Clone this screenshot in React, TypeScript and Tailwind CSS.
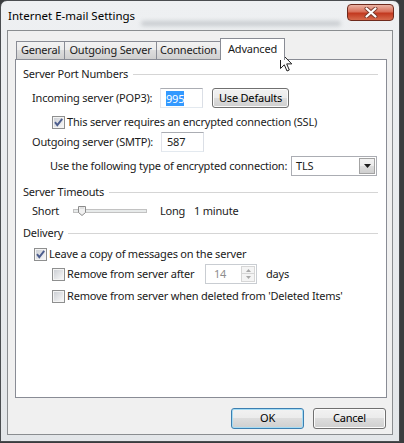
import React from "react";

const btn =
  "flex items-center justify-center rounded-[3px] border bg-[linear-gradient(#f2f2f2_0%,#ebebeb_50%,#dddddd_50%,#cfcfcf_100%)] text-[11px] text-black";

const Checkbox = ({ checked = false }: { checked?: boolean }) => (
  <svg width="13" height="13" viewBox="0 0 13 13" className="shrink-0">
    <defs>
      <linearGradient id="cbfill" x1="0" y1="0" x2="1" y2="1">
        <stop offset="0" stopColor="#cdd0d5" />
        <stop offset="1" stopColor="#f7f7f7" />
      </linearGradient>
    </defs>
    <rect x="0.5" y="0.5" width="12" height="12" fill="#f4f4f4" stroke="#8e8f8f" />
    <rect x="2" y="2" width="9" height="9" fill="url(#cbfill)" />
    {checked && (
      <path d="M3 6.2 L5.3 9.2 L10.2 2.8" fill="none" stroke="#4c5d8d" strokeWidth="1.9" />
    )}
  </svg>
);

const SectionHeader = ({ title, className = "" }: { title: string; className?: string }) => (
  <div className={`flex items-center ${className}`}>
    <span>{title}</span>
    <span className="ml-[5px] h-px flex-1 bg-[#d5d5d5]" />
  </div>
);

const TextBox = ({ value, selected = false, className = "" }: { value: string; selected?: boolean; className?: string }) => (
  <div
    className={`flex h-[20px] items-center border border-[#abadb3] border-b-[#e3e9ef] border-l-[#e2e3ea] border-r-[#dbdfe6] bg-white pl-[5px] ${className}`}
  >
    {selected ? <span className="bg-[#3399ff] leading-[15px] text-white">{value}</span> : <span>{value}</span>}
  </div>
);

const Tab = ({ label, active = false, className = "" }: { label: string; active?: boolean; className?: string }) =>
  active ? (
    <div
      className={`relative z-10 -mb-px flex h-[22px] items-start justify-center border border-b-0 border-[#898c95] bg-white pt-[2px] ${className}`}
    >
      {label}
    </div>
  ) : (
    <div
      className={`flex h-[18px] items-center justify-center border border-b-0 border-[#898c95] bg-[linear-gradient(#f2f2f2_0%,#ebebeb_50%,#dddddd_50%,#cfcfcf_100%)] ${className}`}
    >
      {label}
    </div>
  );

const Slider = () => (
  <svg width="74" height="14" viewBox="0 0 74 14" className="shrink-0">
    <rect x="0.5" y="5.5" width="73" height="3" fill="#e7eaea" stroke="#c2c2c2" />
    <path d="M5.5 2.5 H12.5 V8.5 L9 11.5 L5.5 8.5 Z" fill="#f1f1f1" stroke="#8c8c8c" />
    <path d="M7 4 H11" stroke="#d0d0d0" />
  </svg>
);

export default function App() {
  return (
    <div className="relative h-[443px] w-[404px] overflow-hidden whitespace-nowrap bg-[#3a3c3e] font-['Segoe_UI','Noto_Sans',sans-serif] text-[11px] tracking-[-0.2px] text-[#1b1b1b]">
      <div className="flex h-[442px] w-[400px] flex-col rounded-t-[7px] border border-[#4a4d50] bg-[linear-gradient(#eef0f2,#e3e6e9)]">
        {/* title bar */}
        <div className="flex h-[29px] items-start pl-[7px] pr-[5px]">
          <span className="mt-[6px] text-[11.5px] tracking-normal text-black">Internet E-mail Settings</span>
          <span className="mx-[6px] mt-[20px] h-[5px] flex-1 rounded bg-[#aeb3b8] opacity-60 blur-[2px]" />
          <div className="mt-[3px] flex h-[17px] w-[47px] items-center justify-center rounded-[4px] border border-[#6e2a1d] bg-[linear-gradient(#eab3a4_0%,#d9705a_45%,#c2391f_55%,#d66a4c_100%)]">
            <svg width="14" height="11" viewBox="0 0 14 11">
              <path d="M2.5 1.5 L11.5 9.5 M11.5 1.5 L2.5 9.5" stroke="#7a3a2c" strokeWidth="4" strokeLinecap="round" />
              <path d="M2.5 1.5 L11.5 9.5 M11.5 1.5 L2.5 9.5" stroke="#ffffff" strokeWidth="2.2" strokeLinecap="round" />
            </svg>
          </div>
        </div>

        {/* client area */}
        <div className="mx-[6px] flex h-[405px] flex-col border border-[#8a8d90] bg-[#f0f0f0] pl-[7px] pr-[5px] pt-[7px]">
          <div className="flex h-[21px] items-end pl-[1px]">
            <Tab label="General" className="w-[49px]" />
            <Tab label="Outgoing Server" className="w-[92px] border-l-0" />
            <Tab label="Connection" className="w-[64px] border-l-0" />
            <Tab label="Advanced" active className="-ml-[1px] w-[65px]" />
          </div>

          <div className="flex h-[339px] w-[372px] flex-col border border-[#898c95] bg-white pl-[7px] pr-[8px] pt-[7px]">
            <SectionHeader title="Server Port Numbers" className="h-[15px]" />

            <div className="mt-[6px] flex h-[20px] items-center pl-[9px]">
              <span className="w-[128px]">Incoming server (POP3):</span>
              <TextBox value="995" selected className="w-[43px]" />
              <button className={`${btn} ml-[9px] h-[20px] w-[77px] border-[#707070] shadow-[inset_0_0_0_1px_#fbfbfb]`}>
                Use Defaults
              </button>
            </div>

            <div className="mt-[6px] flex h-[16px] items-center gap-[2px] pl-[29px]">
              <Checkbox checked />
              <span>This server requires an encrypted connection (SSL)</span>
            </div>

            <div className="mt-[2px] flex h-[20px] items-center pl-[9px]">
              <span className="w-[129px]">Outgoing server (SMTP):</span>
              <TextBox value="587" className="w-[43px]" />
            </div>

            <div className="mt-[4px] flex h-[20px] items-center pl-[27px]">
              <span className="w-[241px]">Use the following type of encrypted connection:</span>
              <div className="flex h-[20px] w-[86px] items-center justify-between border border-[#abadb3] bg-white pl-[4px] pr-[1px]">
                <span>TLS</span>
                <div className="flex h-[16px] w-[16px] items-center justify-center border border-[#a3a3a3] bg-[linear-gradient(#f2f2f2_0%,#ebebeb_50%,#dddddd_50%,#cfcfcf_100%)]">
                  <svg width="7" height="4" viewBox="0 0 7 4">
                    <path d="M0 0 H7 L3.5 4 Z" fill="#1b1b1b" />
                  </svg>
                </div>
              </div>
            </div>

            <SectionHeader title="Server Timeouts" className="mt-[8px] h-[16px]" />

            <div className="mt-[3px] flex h-[16px] items-center pl-[9px]">
              <span className="w-[41px]">Short</span>
              <Slider />
              <span className="ml-[13px] w-[34px]">Long</span>
              <span>1 minute</span>
            </div>

            <SectionHeader title="Delivery" className="mt-[6px] h-[16px]" />

            <div className="mt-[5px] flex h-[16px] items-center gap-[2px] pl-[11px]">
              <Checkbox checked />
              <span>Leave a copy of messages on the server</span>
            </div>

            <div className="mt-[2px] flex h-[20px] items-center pl-[29px]">
              <Checkbox />
              <span className="ml-[2px] w-[138px]">Remove from server after</span>
              <div className="flex h-[20px] w-[52px] items-center justify-between border border-[#c9cdd2] bg-white pl-[8px] pr-[1px] text-[#8d8d8d]">
                <span>14</span>
                <div className="flex h-[16px] w-[14px] flex-col">
                  <div className="flex h-[8px] items-center justify-center border border-[#d6d6d6] bg-[#f4f4f4]">
                    <svg width="5" height="3" viewBox="0 0 5 3">
                      <path d="M0 3 L2.5 0 L5 3 Z" fill="#a8a8a8" />
                    </svg>
                  </div>
                  <div className="flex h-[8px] items-center justify-center border border-t-0 border-[#d6d6d6] bg-[#f4f4f4]">
                    <svg width="5" height="3" viewBox="0 0 5 3">
                      <path d="M0 0 H5 L2.5 3 Z" fill="#a8a8a8" />
                    </svg>
                  </div>
                </div>
              </div>
              <span className="ml-[9px]">days</span>
            </div>

            <div className="mt-[4px] flex h-[16px] items-center gap-[2px] pl-[29px]">
              <Checkbox />
              <span>Remove from server when deleted from 'Deleted Items'</span>
            </div>
          </div>

          <div className="mt-[10px] flex justify-end gap-[9px] pr-[1px]">
            <button className={`${btn} h-[21px] w-[73px] border-[#3c7fb1] shadow-[inset_0_0_0_1px_#a6dcf4]`}>OK</button>
            <button className={`${btn} h-[21px] w-[73px] border-[#707070] shadow-[inset_0_0_0_1px_#fbfbfb]`}>Cancel</button>
          </div>
        </div>
      </div>

      {/* mouse pointer over the Advanced tab */}
      <svg className="absolute left-[280px] top-[52px]" width="13" height="21" viewBox="0 0 13 21">
        <path d="M0.5 0.5 V16.5 L4.3 12.8 L7 19 L9.3 18 L6.7 11.9 L11.8 11.9 Z" fill="#ffffff" stroke="#222" strokeWidth="1" strokeLinejoin="round" />
      </svg>
    </div>
  );
}
